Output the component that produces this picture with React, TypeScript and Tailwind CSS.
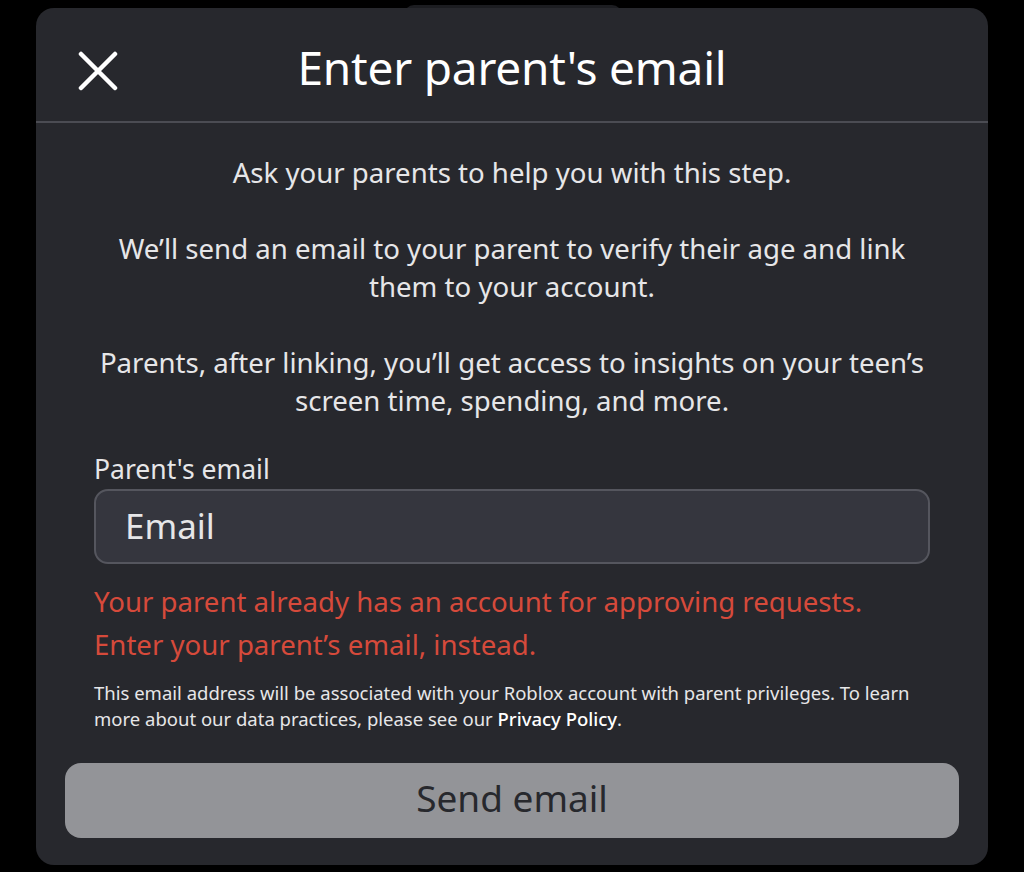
import React from "react";

const font = { fontFamily: '"Noto Sans", "Open Sans", Arial, sans-serif' };

function CloseIcon() {
  return (
    <svg width="40" height="40" viewBox="0 0 40 40" fill="none">
      <path d="M3 3 L37 37 M37 3 L3 37" stroke="#ffffff" strokeWidth="4.5" strokeLinecap="round" />
    </svg>
  );
}

export default function App() {
  return (
    <div className="w-[1024px] h-[872px] bg-black overflow-hidden relative" style={font}>
      {/* sheet peeking behind the dialog */}
      <div className="absolute left-[404px] top-[5px] w-[218px] h-[12px] rounded-t-[10px] bg-[#1c1d21]" />
      <div className="relative mx-[36px] mt-[8px] h-[857px] rounded-[18px] bg-[#27282d] flex flex-col">
        <div className="h-[115px] flex items-center relative border-b-[2px] border-[#4b4c53]">
          <div className="absolute left-[42px] top-[43px]">
            <CloseIcon />
          </div>
          <h1 className="w-full text-center text-[46px] text-white font-normal leading-none tracking-[-0.2px] pt-[5px]">
            Enter parent's email
          </h1>
        </div>
        <div className="px-[40px] pt-[30px] text-center text-[#e6e6e8] text-[27.6px] leading-[38px]">
          <p>Ask your parents to help you with this step.</p>
          <p className="mt-[38px]">
            We’ll send an email to your parent to verify their age and link
            <br />
            them to your account.
          </p>
          <p className="mt-[38px]">
            Parents, after linking, you’ll get access to insights on your teen’s
            <br />
            screen time, spending, and more.
          </p>
        </div>
        <div className="px-[58px] mt-[32px]">
          <label className="block text-[26.5px] leading-[36px] text-[#e6e6e8]">Parent's email</label>
          <div className="mt-[2px] h-[75px] rounded-[14px] bg-[#35363e] border-2 border-[#55565e] flex items-center pl-[29px]">
            <span className="text-[35px] text-[#e6e6e8]">Email</span>
          </div>
          <p className="mt-[16px] text-[27.6px] leading-[43px] text-[#d64a3b]">
            Your parent already has an account for approving requests.
            <br />
            Enter your parent’s email, instead.
          </p>
          <p className="mt-[14px] text-[18.5px] leading-[26px] text-[#e6e6e8] whitespace-nowrap">
            This email address will be associated with your Roblox account with parent privileges. To learn
            <br />
            more about our data practices, please see our <span className="text-white font-medium">Privacy Policy</span>.
          </p>
        </div>
        <div className="px-[29px] mt-[31px]">
          <button className="w-full h-[75px] rounded-[16px] bg-[#939498] flex items-center justify-center pb-[6px] text-[37px] text-[#27282d]">
            Send email
          </button>
        </div>
      </div>
    </div>
  );
}
